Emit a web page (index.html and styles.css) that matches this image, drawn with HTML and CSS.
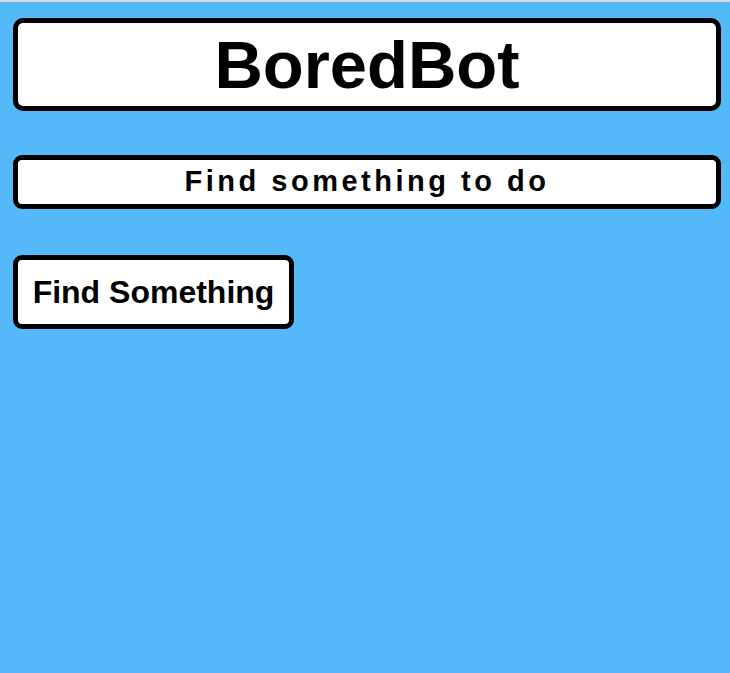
FILE: index.html
```html
<!DOCTYPE html>
<html>
<head>
<meta charset="utf-8">
<title>BoredBot</title>
<link rel="stylesheet" href="styles.css">
</head>
<body>
<div class="topbar"></div>
<main class="app">
  <h1 class="title">BoredBot</h1>
  <h2 class="subtitle">Find something to do</h2>
  <div class="actions">
    <button class="find-btn">Find Something</button>
  </div>
</main>
</body>
</html>
```

FILE: styles.css
```css
html, body {
  margin: 0;
  padding: 0;
  background: #54b9f9;
  font-family: "Liberation Sans", Arial, Helvetica, sans-serif;
}
.topbar {
  height: 2px;
  background: #dcdcdc;
}
.app {
  display: flex;
  flex-direction: column;
  padding: 16px 0 0 13px;
  width: 708px;
}
.title {
  margin: 0;
  box-sizing: border-box;
  height: 93px;
  border: 5px solid #000;
  border-radius: 10px;
  background: #fff;
  text-align: center;
  font-size: 67px;
  font-weight: bold;
  line-height: 84px;
  color: #000;
}
.subtitle {
  margin: 44px 0 0 0;
  box-sizing: border-box;
  height: 54px;
  border: 5px solid #000;
  border-radius: 9px;
  background: #fff;
  text-align: center;
  font-size: 29px;
  font-weight: bold;
  letter-spacing: 3.5px;
  line-height: 43px;
  color: #000;
}
.actions {
  display: flex;
  margin-top: 46px;
}
.find-btn {
  box-sizing: border-box;
  height: 74px;
  width: 281px;
  padding: 0 12px;
  border: 5px solid #000;
  border-radius: 9px;
  background: #fff;
  font-family: "Liberation Sans", Arial, Helvetica, sans-serif;
  font-size: 32px;
  font-weight: bold;
  color: #000;
  line-height: 64px;
  text-align: center;
}
```
